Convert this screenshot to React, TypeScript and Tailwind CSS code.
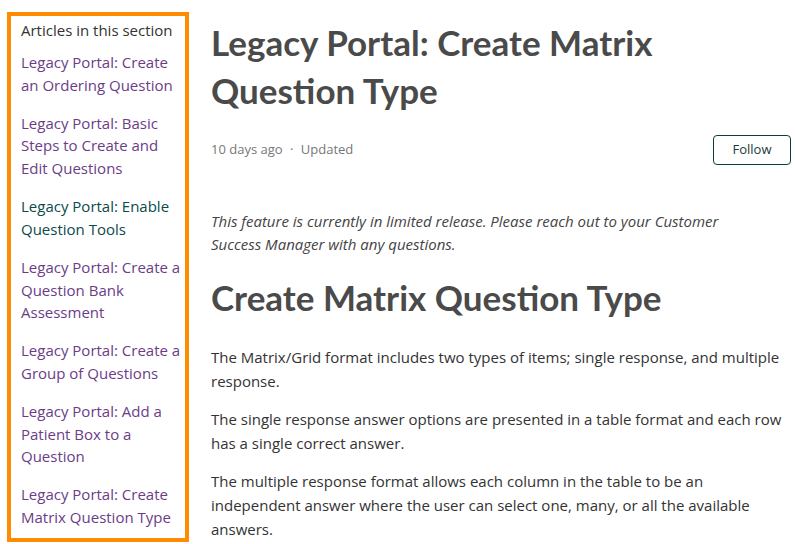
const articles = [
  { title: "Legacy Portal: Create an Ordering Question" },
  { title: "Legacy Portal: Basic Steps to Create and Edit Questions" },
  { title: "Legacy Portal: Enable Question Tools", current: true },
  { title: "Legacy Portal: Create a Question Bank Assessment" },
  { title: "Legacy Portal: Create a Group of Questions" },
  { title: "Legacy Portal: Add a Patient Box to a Question" },
  { title: "Legacy Portal: Create Matrix Question Type" },
];

const body = "font-['Open_Sans',sans-serif]";
const display = "font-['Lato',sans-serif]";

export default function App() {
  return (
    <div className={`flex min-h-[544px] bg-white pl-[7px] ${body}`}>
      <aside className="mt-3 h-[530px] w-[182px] shrink-0 border-4 border-[#ff8b00] pl-[10px] pr-[2px] pt-[3px]">
        <h3 className="text-[15px] leading-[22px] text-[#333333]">Articles in this section</h3>
        <ul className="mt-[10px] flex flex-col gap-[15.6px]">
          {articles.map((a) => (
            <li key={a.title}>
              <a
                href="#"
                className={`block text-[15px] leading-[22.6px] ${a.current ? "text-[#0d4a4c]" : "text-[#6b3d87]"}`}
              >
                {a.title}
              </a>
            </li>
          ))}
        </ul>
      </aside>

      <main className="ml-[22px] w-[580px] pt-[18px]">
        <h1 className={`${display} text-[35px] font-bold leading-[48px] text-[#4a4a4a]`}>
          Legacy Portal: Create Matrix Question Type
        </h1>

        <div className="mt-[21px] flex items-center justify-between">
          <div className="text-[13px] text-[#777777]">
            10 days ago <span className="mx-1">·</span> Updated
          </div>
          <button className="h-[30px] w-[78px] rounded-[4px] border border-[#0d3d3f] text-[13px] text-[#1c3a3c]">
            Follow
          </button>
        </div>

        <p className="mt-[45px] max-w-[550px] text-[15px] italic leading-[23px] text-[#444444]">
          This feature is currently in limited release. Please reach out to your Customer Success
          Manager with any questions.
        </p>

        <h2 className={`${display} mt-[17px] text-[35px] font-bold leading-[48px] text-[#4a4a4a]`}>
          Create Matrix Question Type
        </h2>

        <div className="mt-[25px] flex flex-col gap-[15px] text-[15px] leading-[23.6px] text-[#333333]">
          <p>
            The Matrix/Grid format includes two types of items; single response, and multiple
            response.
          </p>
          <p>
            The single response answer options are presented in a table format and each row has a
            single correct answer.
          </p>
          <p>
            The multiple response format allows each column in the table to be an independent
            answer where the user can select one, many, or all the available answers.
          </p>
        </div>
      </main>
    </div>
  );
}
